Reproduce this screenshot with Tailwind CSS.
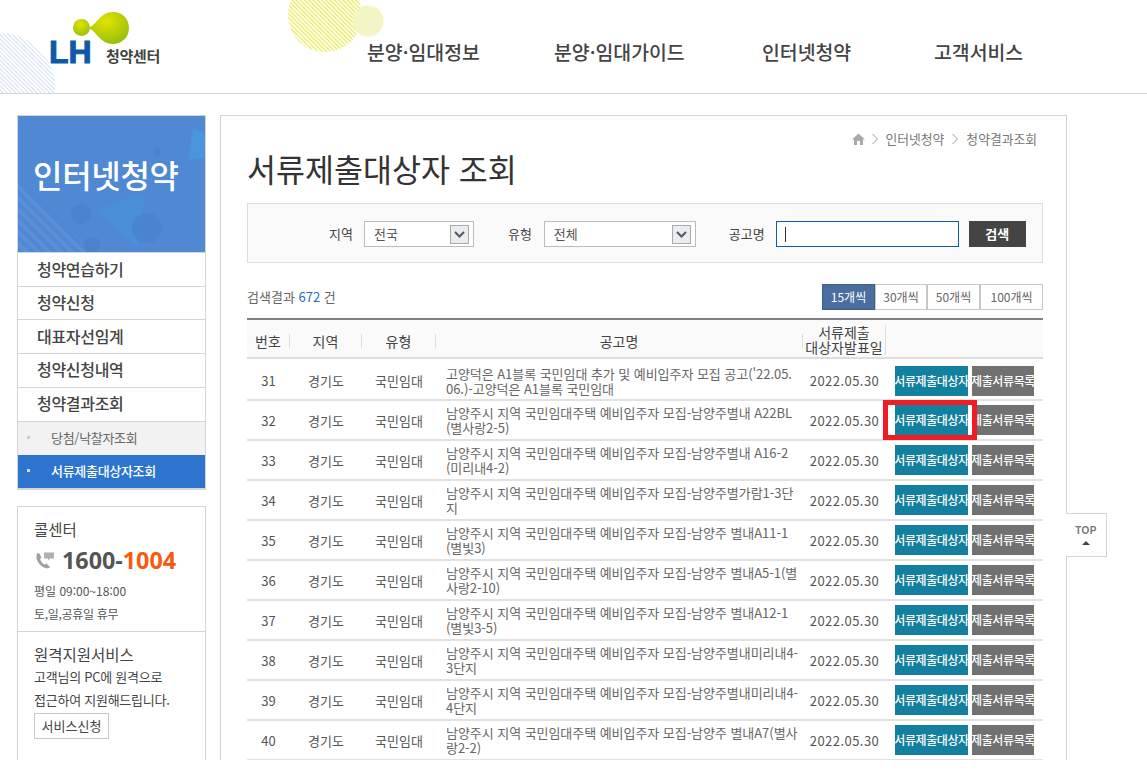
<!DOCTYPE html>
<html lang="ko">
<head>
  <meta charset="UTF-8">
  <meta name="viewport" content="width=device-width, initial-scale=1.0">
  <title>서류제출대상자 조회</title>
  <script src="https://cdn.jsdelivr.net/npm/@tailwindcss/browser@4"></script>
</head>
<body class="bg-white text-[#444] font-['Noto_Sans_CJK_KR','Noto_Sans',sans-serif] overflow-hidden h-[783px]">
  <div class="h-[760px] overflow-hidden relative">
    <!-- header -->
    <header class="relative h-[94px] border-b border-[#d5d5d5] overflow-hidden">
      <svg class="absolute left-0 top-0" width="420" height="93" viewBox="0 0 420 93">
        <defs>
          <pattern id="h1" width="3" height="3" patternUnits="userSpaceOnUse" patternTransform="rotate(45)"><rect width="3" height="1" fill="#d3e0ef"/></pattern>
          <pattern id="h2" width="3" height="3" patternUnits="userSpaceOnUse" patternTransform="rotate(45)"><rect width="3" height="1.2" fill="#e8ea4a"/></pattern>
          <radialGradient id="g1" cx="0.45" cy="0.3" r="0.8"><stop offset="0" stop-color="#e0e400"/><stop offset="1" stop-color="#8fb910"/></radialGradient>
        </defs>
        <circle cx="0" cy="88" r="55" fill="url(#h1)"/>
        <circle cx="325" cy="15" r="37" fill="url(#h2)"/>
        <circle cx="368" cy="21" r="15.5" fill="#f3f6c4"/>
        <circle cx="81.5" cy="27.5" r="8.5" fill="url(#g1)"/>
        <path d="M88 28 C97 25 100 12 113 12 C123 12 129 19 129 28 C129 38 121 44 113 44 C100 44 97 31 88 28Z" fill="url(#g1)"/>
      </svg>
      <div class="absolute left-[49px] top-[37px] text-[32px] leading-[30px] font-bold text-[#0d5aa7] font-['Liberation_Sans',sans-serif] [-webkit-text-stroke:1px_#0d5aa7]">LH</div>
      <div class="absolute left-[106px] top-[46px] text-[15px] leading-[20px] font-bold text-[#444] tracking-[-0.3px]">청약센터</div>
      <nav class="absolute left-[367px] top-[39px] flex text-[19.4px] leading-[26px] font-medium text-[#444]">
        <a class="w-[187px]">분양·임대정보</a>
        <a class="w-[208px]">분양·임대가이드</a>
        <a class="w-[172px]">인터넷청약</a>
        <a>고객서비스</a>
      </nav>
    </header>

    <div class="flex items-start pl-[17px] pt-[21px]">
      <!-- sidebar -->
      <aside class="w-[189px] shrink-0 mr-[14px]">
        <div class="relative h-[138px] bg-[#4f88d3] border border-[#d5d5d5] overflow-hidden">
          <svg class="absolute inset-0" width="187" height="136" viewBox="0 0 187 136">
            <defs><pattern id="h3" width="8" height="8" patternUnits="userSpaceOnUse" patternTransform="rotate(45)"><rect width="8" height="4" fill="#5b90d6"/></pattern></defs>
            <path d="M0 65 L75 136 L0 136Z" fill="url(#h3)"/>
            <circle cx="63" cy="98" r="10" fill="#4a82cc"/>
            <path d="M80 94 L127 77 L119 131Z" fill="#4a90d8"/>
            <path d="M175 12 L187 18 L187 42 L170 44Z" fill="#4a95dc"/>
            <circle cx="129" cy="112" r="15" fill="#4a84cf"/>
            <circle cx="139" cy="36" r="4" fill="#4a82cc"/>
            <circle cx="74" cy="129" r="8" fill="#4a82cc"/>
          </svg>
          <h2 class="relative pt-[34px] pl-[15px] text-[32px] leading-[48px] font-medium text-white tracking-[-0.3px]">인터넷청약</h2>
        </div>
        <ul class="border-x border-b-2 border-[#d5d5d5] text-[16px] font-medium text-[#444] tracking-[-0.3px]">
          <li class="h-[34px] leading-[32px] pl-[19px] border-b border-[#d5d5d5]">청약연습하기</li>
          <li class="h-[33px] leading-[30px] pl-[19px] border-b border-[#d5d5d5]">청약신청</li>
          <li class="h-[34px] leading-[33px] pl-[19px] border-b border-[#d5d5d5]">대표자선임계</li>
          <li class="h-[34px] leading-[30px] pl-[19px] border-b border-[#d5d5d5]">청약신청내역</li>
          <li class="h-[34px] leading-[30px] pl-[19px] border-b border-[#d5d5d5]">청약결과조회</li>
          <li class="flex items-center h-[33px] pb-[2px] bg-[#f2f2f2] text-[13px] font-normal text-[#666]"><span class="w-[3px] h-[3px] bg-[#ccc] ml-[9px] mr-[21px]"></span>당첨/낙찰자조회</li>
          <li class="flex items-center h-[33px] pb-[2px] bg-[#2d74ce] text-[13px] font-medium text-white"><span class="w-[3px] h-[3px] bg-[#cfe0f5] ml-[9px] mr-[21px]"></span>서류제출대상자조회</li>
        </ul>
        <div class="mt-[16px] border-x border-t border-[#d5d5d5] h-[300px]">
          <div class="pl-[16px] pt-[10px] h-[125px] border-b border-[#d5d5d5]">
            <p class="text-[15.5px] leading-[24px] text-[#444]">콜센터</p>
            <div class="flex items-center mt-[7px] h-[24px]">
              <svg width="20" height="17" viewBox="0 0 20 17" class="mr-[7px] ml-[1px]">
                <path d="M2 1.5 C0 6 3 12 8 15 C11 17 14 16.5 15 15 L11.5 11.5 L9.5 12.5 C7.5 11.5 5.5 9 5 7 L6.5 5.5 L4 1Z" fill="#a0a0a0"/>
                <path d="M9 0.5 H19 V6.5 H15 L13 8.5 V6.5 H9Z" fill="#b0b0b0"/>
              </svg>
              <span class="text-[23.3px] leading-[24px] font-bold text-[#555] font-['Open_Sans',sans-serif]">1600-<span class="text-[#f9590f]">1004</span></span>
            </div>
            <p class="mt-[7px] text-[12px] leading-[23px] text-[#555]">평일 09:00~18:00</p>
            <p class="text-[12px] leading-[23px] text-[#555] tracking-[-0.3px]">토,일,공휴일 휴무</p>
          </div>
          <div class="pl-[16px] pt-[11px]">
            <p class="text-[15.5px] leading-[22px] text-[#444]">원격지원서비스</p>
            <p class="text-[13px] leading-[23px] text-[#444] tracking-[-0.25px]">고객님의 PC에 원격으로</p>
            <p class="text-[13px] leading-[24px] text-[#444] tracking-[-0.25px]">접근하여 지원해드립니다.</p>
            <span class="inline-block border border-[#c8c8c8] h-[26px] leading-[24px] w-[75px] text-center text-[13px] text-[#444]">서비스신청</span>
          </div>
        </div>
      </aside>

      <!-- main -->
      <main class="w-[847px] h-[700px] shrink-0 border-x border-t border-[#d5d5d5] pl-[26px] pr-[23px]">
        <div class="flex items-start justify-end h-[34px] pt-[14px] pr-[6px] text-[12.8px] leading-[18px] text-[#777]">
          <svg width="13" height="12" viewBox="0 0 13 12" class="mr-[7px] mt-[3px]"><path d="M6.5 0.5 L13 6.5 H11 V12 H8 V8 H5 V12 H2 V6.5 H0Z" fill="#aaa"/></svg>
          <svg width="6" height="12" viewBox="0 0 6 12" class="mr-[7px] mt-[3px]"><path d="M0.5 1 L5.5 6 L0.5 11" fill="none" stroke="#999"/></svg>
          <span>인터넷청약</span>
          <svg width="6" height="12" viewBox="0 0 6 12" class="ml-[8px] mr-[8px] mt-[3px]"><path d="M0.5 1 L5.5 6 L0.5 11" fill="none" stroke="#999"/></svg>
          <span>청약결과조회</span>
        </div>
        <h1 class="text-[31.5px] leading-[42px] font-normal text-[#333] -mt-[3px]">서류제출대상자 조회</h1>

        <form class="mt-[14px] flex items-center h-[60px] pt-[2px] bg-[#fafafa] border border-[#ddd] text-[13px] text-[#444]">
          <label class="ml-[81px] mr-[11px]">지역</label>
          <div class="w-[110px] h-[26px] bg-white border border-[#bbb] flex items-center justify-between pl-[9px] pr-[4px] text-[#555]">전국
            <span class="w-[19px] h-[19px] bg-[#ececec] border border-[#aaa] flex items-center justify-center"><svg width="11" height="7" viewBox="0 0 11 7"><path d="M1 1 L5.5 5.5 L10 1" fill="none" stroke="#4a5a6a" stroke-width="2"/></svg></span>
          </div>
          <label class="ml-[34px] mr-[12px]">유형</label>
          <div class="w-[152px] h-[26px] bg-white border border-[#bbb] flex items-center justify-between pl-[9px] pr-[4px] text-[#555]">전체
            <span class="w-[19px] h-[19px] bg-[#ececec] border border-[#aaa] flex items-center justify-center"><svg width="11" height="7" viewBox="0 0 11 7"><path d="M1 1 L5.5 5.5 L10 1" fill="none" stroke="#4a5a6a" stroke-width="2"/></svg></span>
          </div>
          <label class="ml-[33px] mr-[11px]">공고명</label>
          <div class="w-[183px] h-[26px] bg-white border border-[#0d5aa7] flex items-center pl-[8px]"><span class="w-px h-[15px] bg-[#333]"></span></div>
          <button type="button" class="ml-[10px] w-[57px] h-[26px] bg-[#444] text-white font-bold text-[13px]">검색</button>
        </form>

        <div class="mt-[21px] flex items-center justify-between h-[26px]">
          <p class="text-[13px] text-[#666]">검색결과 <span class="text-[#1f6fc4]">672</span> 건</p>
          <div class="flex text-[12px] text-[#666] h-[26px]">
            <a class="w-[53px] flex items-center justify-center bg-[#4a6ea0] border border-[#3f5d86] text-white">15개씩</a>
            <a class="w-[52px] flex items-center justify-center border border-[#c8c8c8]">30개씩</a>
            <a class="w-[53px] flex items-center justify-center border border-[#c8c8c8]">50개씩</a>
            <a class="w-[63px] flex items-center justify-center border border-[#c8c8c8]">100개씩</a>
          </div>
        </div>

        <table class="mt-[8px] w-[796px] table-fixed border-collapse border-t-2 border-[#808080]">
          <colgroup><col class="w-[43px]"><col class="w-[72px]"><col class="w-[74px]"><col class="w-[367px]"><col class="w-[83px]"><col></colgroup>
          <thead>
            <tr class="h-[39px] bg-[#fafafa] border-b-2 border-[#ddd] text-[14px] text-[#444]">
              <th class="font-normal pt-[4px]"><span class="block border-r border-[#ddd] leading-[14px]">번호</span></th>
              <th class="font-normal pt-[4px]"><span class="block border-r border-[#ddd] leading-[14px]">지역</span></th>
              <th class="font-normal pt-[4px]"><span class="block border-r border-[#ddd] leading-[14px]">유형</span></th>
              <th class="font-normal pt-[4px]"><span class="block border-r border-[#ddd] leading-[14px]">공고명</span></th>
              <th class="font-normal pt-[3px] leading-[15px]"><span class="block border-r border-[#ddd] whitespace-nowrap">서류제출<br>대상자발표일</span></th>
              <th></th>
            </tr>
          </thead>
          <tbody id="rows" class="text-[13px] text-[#555]"></tbody>
        </table>
      </main>

      <!-- top button -->
      <a class="mt-[398px] w-[41px] h-[44px] -ml-px border border-l-0 border-[#d5d5d5] bg-white flex flex-col items-center justify-center shrink-0">
        <span class="text-[10px] leading-[11px] font-bold text-[#777] tracking-[0.3px] font-['Liberation_Sans',sans-serif]">TOP</span>
        <svg width="8" height="4" viewBox="0 0 8 4" class="mt-[5px]"><path d="M4 0 L8 4 H0Z" fill="#444"/></svg>
      </a>
    </div>
  </div>
  <script>
    const rows = [
      [31, `고양덕은 A1블록 국민임대 추가 및 예비입주자 모집 공고('22.05.<span class="whitespace-nowrap">06.)-고양덕은</span> A1블록 국민임대`],
      [32, '남양주시 지역 국민임대주택 예비입주자 모집-남양주별내 A22BL(별사랑2-5)'],
      [33, '남양주시 지역 국민임대주택 예비입주자 모집-남양주별내 A16-2(미리내4-2)'],
      [34, '남양주시 지역 국민임대주택 예비입주자 모집-남양주별가람1-3단지'],
      [35, '남양주시 지역 국민임대주택 예비입주자 모집-남양주 별내A11-1(별빛3)'],
      [36, '남양주시 지역 국민임대주택 예비입주자 모집-남양주 별내A5-1(별사랑2-10)'],
      [37, '남양주시 지역 국민임대주택 예비입주자 모집-남양주 별내A12-1(별빛3-5)'],
      [38, '남양주시 지역 국민임대주택 예비입주자 모집-남양주별내미리내4-3단지'],
      [39, '남양주시 지역 국민임대주택 예비입주자 모집-남양주별내미리내4-4단지'],
      [40, '남양주시 지역 국민임대주택 예비입주자 모집-남양주 별내A7(별사랑2-2)'],
    ];
    document.getElementById('rows').innerHTML = rows.map(([no, title]) => {
      const pad = no === 31 ? 'pt-[3px]' : 'pt-[1px]';
      return `
      <tr class="${no === 31 ? 'h-[42px]' : 'h-[40px]'} border-b-2 border-[#e2e2e2]">
        <td class="text-center ${pad}">${no}</td>
        <td class="text-center ${pad}">경기도</td>
        <td class="text-center ${pad}">국민임대</td>
        <td class="pl-[10px] pr-[2px] leading-[15px] text-[#666] break-all tracking-[-0.05px] ${no === 31 ? 'pt-[3px]' : ''}">${title}</td>
        <td class="text-center tracking-[0.45px] ${pad}">2022.05.30</td>
        <td class="${no === 31 ? 'pt-[3px]' : ''}">
          <div class="relative flex gap-[4px] pl-[9px]">
            <a class="w-[73px] h-[30px] bg-[#12809e] text-white font-medium text-[12px] flex items-center justify-center whitespace-nowrap tracking-[-0.4px]">서류제출대상자</a>
            <a class="w-[62px] h-[30px] bg-[#717171] text-white font-medium text-[12px] flex items-center justify-center whitespace-nowrap tracking-[-0.4px] overflow-hidden">제출서류목록</a>
            ${no === 32 ? '<span class="absolute left-[-3px] top-[-5px] w-[94px] h-[40px] border-[5px] border-[#ee1c25]"></span>' : ''}
          </div>
        </td>
      </tr>`;
    }).join('');
  </script>
</body>
</html>
